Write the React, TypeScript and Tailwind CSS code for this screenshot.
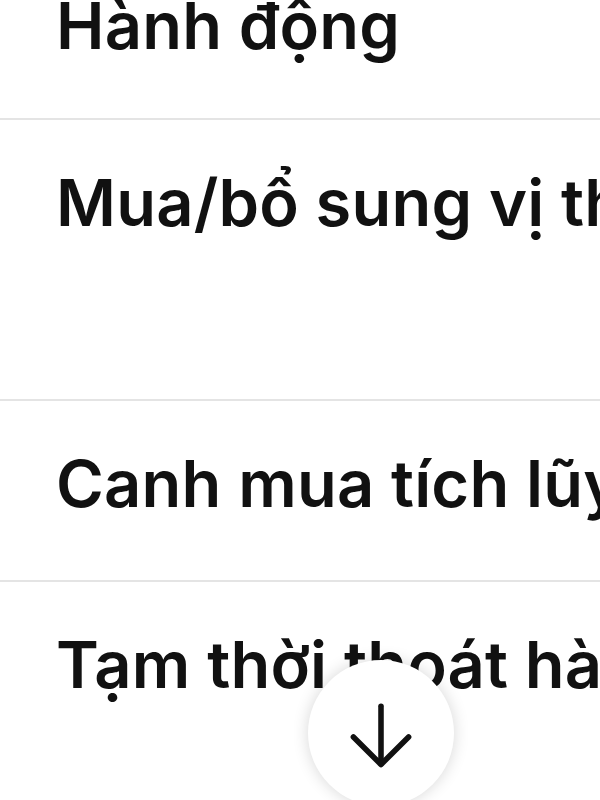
import React from 'react';

const rows = [
  { label: 'Hành động', height: 'h-[120px]', pad: 'pt-0 -mt-[7px]' },
  { label: 'Mua/bổ sung vị thế', height: 'h-[281px]', pad: 'pt-[50px]' },
  { label: 'Canh mua tích lũy', height: 'h-[181px]', pad: 'pt-[50px]' },
  { label: 'Tạm thời thoát hàng', height: 'h-[220px]', pad: 'pt-[50px]' },
];

const App: React.FC = () => {
  return (
    <div className="relative w-[600px] h-[800px] overflow-hidden bg-white font-['Inter','Noto_Sans',sans-serif] text-[#111]">
      <div className="flex flex-col">
        {rows.map((row, i) => (
          <div
            key={row.label}
            className={`${row.height} shrink-0 ${i < rows.length - 1 ? 'border-b-2 border-[#e4e4e4]' : ''}`}
          >
            <div className={`${row.pad} pl-[56px] whitespace-nowrap text-[65px] leading-[65px] font-semibold tracking-[0.2px]`}>
              {row.label}
            </div>
          </div>
        ))}
      </div>

      {/* scroll-to-bottom button */}
      <button className="absolute left-[308px] top-[660px] w-[146px] h-[146px] rounded-full bg-white shadow-[0_0_16px_rgba(0,0,0,0.16)] flex items-start justify-center pt-[29px]">
        <svg width="92" height="92" viewBox="0 0 24 24" fill="none" stroke="#111" strokeWidth="1.45" strokeLinecap="round" strokeLinejoin="round">
          <path d="M12 4.5v15" />
          <path d="m19.2 12.5-7.2 7.2-7.2-7.2" />
        </svg>
      </button>
    </div>
  );
};

export default App;
